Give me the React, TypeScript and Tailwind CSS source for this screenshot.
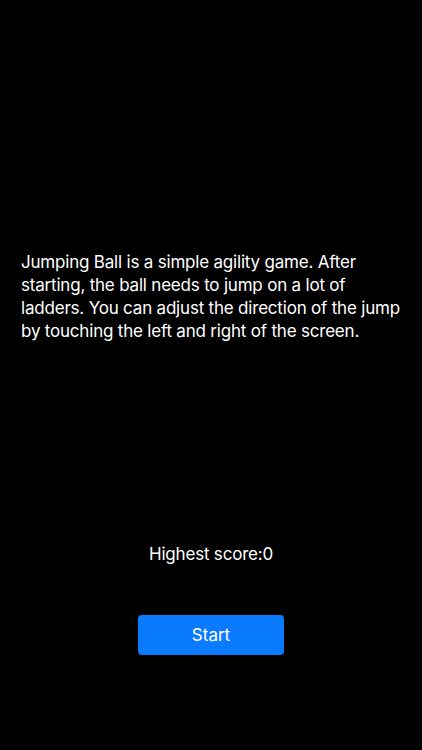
import React from "react";

const App: React.FC = () => {
  return (
    <div className="flex h-[750px] w-full flex-col items-center bg-black font-['Inter','Roboto',sans-serif] text-white">
      <p className="mt-[251px] w-full px-[21px] text-[17px] leading-[23px] tracking-[-0.2px]">
        Jumping Ball is a simple agility game. After starting, the ball needs to jump on a lot of
        ladders. You can adjust the direction of the jump by touching the left and right of the
        screen.
      </p>
      <span className="mt-[200px] text-[17px] leading-[23px] tracking-[-0.2px]">Highest score:0</span>
      <button className="mt-[49px] flex h-[40px] w-[146px] items-center justify-center rounded-[4px] bg-[#0a7aff] text-[17px] leading-[23px] text-white">
        Start
      </button>
    </div>
  );
};

export default App;
